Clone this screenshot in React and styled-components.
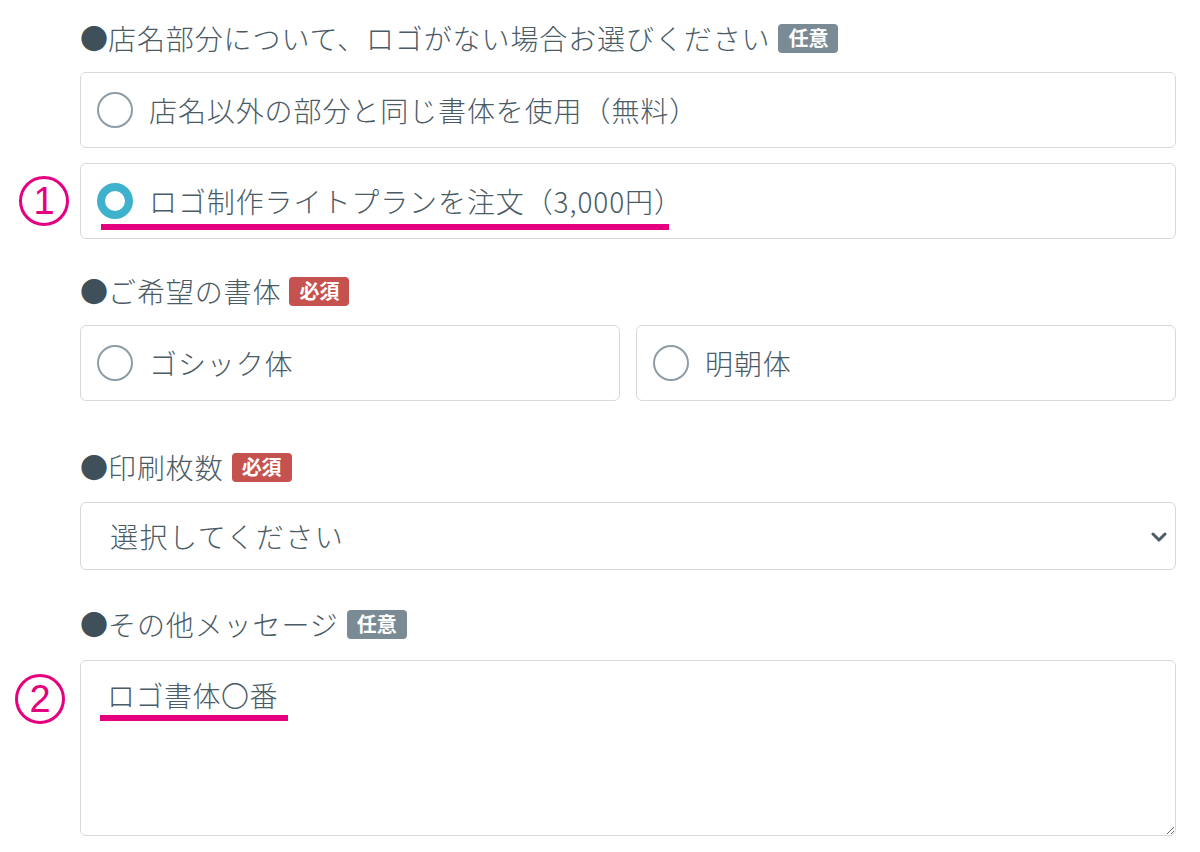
import React from 'react'
import styled, { createGlobalStyle } from 'styled-components'

const Global = createGlobalStyle`
  body {
    margin: 0;
    background: #fff;
    font-family: "Noto Sans CJK JP", "Noto Sans", sans-serif;
    font-weight: 300;
    color: #4a5b66;
  }
`

const Page = styled.div`
  width: 1200px;
  padding: 17px 24px 0 0;
  box-sizing: border-box;
`

const Row = styled.div`
  display: grid;
  grid-template-columns: 80px 1fr;
  align-items: center;
  margin-top: ${p => p.mt || 0}px;
`

const Heading = styled.div`
  grid-column: 2;
  display: flex;
  align-items: center;
  font-size: 28px;
  line-height: 42px;
  letter-spacing: 0.9px;
  color: #4a5b66;
`

const Dot = styled.span`
  color: #3f505b;
  letter-spacing: 0;
`

const Badge = styled.span`
  display: inline-flex;
  align-items: center;
  justify-content: center;
  margin-left: 8px;
  height: 29px;
  padding: 0 10px;
  border-radius: 4px;
  font-size: 20px;
  font-weight: 700;
  letter-spacing: 0;
  color: #fff;
  background: ${p => (p.required ? '#c5524e' : '#7b8b96')};
`

const Marker = styled.div`
  grid-column: 1;
  justify-self: start;
  align-self: ${p => p.top ? 'start' : 'center'};
  margin-left: ${p => p.ml || 0}px;
  margin-top: ${p => p.top || 0}px;
  width: 44px;
  height: 44px;
  border: 3px solid #e4007f;
  border-radius: 50%;
  display: flex;
  align-items: center;
  justify-content: center;
  font-family: "Liberation Sans", Arial, sans-serif;
  font-size: 38px;
  font-weight: 400;
  color: #e4007f;
  line-height: 1;
`

const Options = styled.div`
  grid-column: 2;
  display: grid;
  grid-template-columns: repeat(${p => p.cols || 1}, 1fr);
  gap: 16px;
`

const Option = styled.div`
  position: relative;
  display: flex;
  align-items: center;
  gap: 16px;
  height: 76px;
  padding-left: 16px;
  border: 1.5px solid #d6d9dc;
  border-radius: 6px;
  box-sizing: border-box;
  font-size: 28px;
  letter-spacing: 0.9px;
  color: #4a5b66;
`

const Radio = styled.span`
  width: 36px;
  height: 36px;
  flex: none;
  border-radius: 50%;
  box-sizing: border-box;
  background: #fff;
  border: ${p => (p.checked ? '8px solid #3eb1cd' : '2px solid #8e9ca5')};
`

const Underline = styled.span`
  position: absolute;
  left: ${p => p.left}px;
  bottom: ${p => p.bottom}px;
  width: ${p => p.width}px;
  height: 6px;
  background: #e4007f;
`

const SelectWrap = styled.div`
  grid-column: 2;
  position: relative;
`

const Select = styled.select`
  width: 100%;
  height: 68px;
  appearance: none;
  -webkit-appearance: none;
  border: 1.5px solid #d6d9dc;
  border-radius: 6px;
  background: #fff;
  padding: 0 0 0 29px;
  font-family: "Noto Sans CJK JP", "Noto Sans", sans-serif;
  font-weight: 300;
  font-size: 28px;
  letter-spacing: 1.5px;
  color: #4a5b66;
  outline: none;
`

const Chevron = styled.svg`
  position: absolute;
  right: 9px;
  top: 29px;
  pointer-events: none;
`

const AreaWrap = styled.div`
  grid-column: 2;
  position: relative;
  height: 176px;
`

const TextArea = styled.textarea`
  width: 100%;
  height: 100%;
  box-sizing: border-box;
  border: 1.5px solid #d6d9dc;
  border-radius: 6px;
  padding: 14px 26px;
  font-family: "Noto Sans CJK JP", "Noto Sans", sans-serif;
  font-weight: 300;
  font-size: 28px;
  letter-spacing: 0.5px;
  color: #4a5b66;
  resize: vertical;
  outline: none;
  display: block;
`

export default function App() {
  return (
    <Page>
      <Global />
      <Row>
        <Heading>
          <Dot>●</Dot>店名部分について、ロゴがない場合お選びください<Badge>任意</Badge>
        </Heading>
      </Row>
      <Row mt={13}>
        <Options>
          <Option>
            <Radio />
            店名以外の部分と同じ書体を使用（無料）
          </Option>
        </Options>
      </Row>
      <Row mt={15}>
        <Marker ml={19}>1</Marker>
        <Options>
          <Option>
            <Radio checked />
            ロゴ制作ライトプランを注文（3,000円）
            <Underline left={20} bottom={8} width={568} />
          </Option>
        </Options>
      </Row>
      <Row mt={31}>
        <Heading>
          <Dot>●</Dot>ご希望の書体<Badge required>必須</Badge>
        </Heading>
      </Row>
      <Row mt={13}>
        <Options cols={2}>
          <Option>
            <Radio />
            ゴシック体
          </Option>
          <Option>
            <Radio />
            明朝体
          </Option>
        </Options>
      </Row>
      <Row mt={45}>
        <Heading>
          <Dot>●</Dot>印刷枚数<Badge required>必須</Badge>
        </Heading>
      </Row>
      <Row mt={14}>
        <SelectWrap>
          <Select defaultValue="">
            <option value="">選択してください</option>
          </Select>
          <Chevron width="16" height="12" viewBox="0 0 16 12">
            <path d="M2 3l6 6 6-6" fill="none" stroke="#4a5b66" strokeWidth="3" strokeLinecap="round" strokeLinejoin="round" />
          </Chevron>
        </SelectWrap>
      </Row>
      <Row mt={33}>
        <Heading>
          <Dot>●</Dot>その他メッセージ<Badge>任意</Badge>
        </Heading>
      </Row>
      <Row mt={15}>
        <Marker ml={15} top={14}>2</Marker>
        <AreaWrap>
          <TextArea defaultValue="ロゴ書体〇番" />
          <Underline left={20} bottom={115} width={188} />
        </AreaWrap>
      </Row>
    </Page>
  )
}
